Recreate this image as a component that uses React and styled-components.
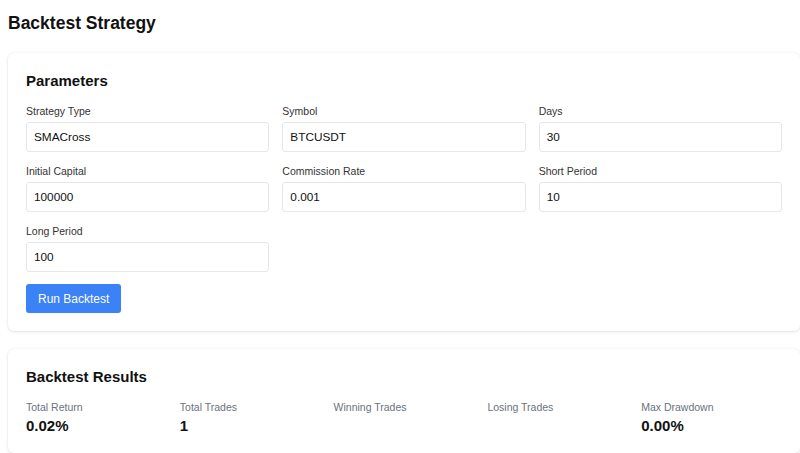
import React from "react";
import styled, { createGlobalStyle } from "styled-components";

const GlobalStyle = createGlobalStyle`
  body {
    margin: 0;
    background: #ffffff;
    font-family: "Liberation Sans", Arial, sans-serif;
    color: #111111;
  }
  * { box-sizing: border-box; }
`;

const Page = styled.div`
  padding: 11px 0 0 8px;
  display: flex;
  flex-direction: column;
`;

const Title = styled.h1`
  margin: 0 0 18px;
  font-size: 17.5px;
  line-height: 24px;
  font-weight: 700;
`;

const Card = styled.section`
  background: #ffffff;
  border-radius: 6px;
  box-shadow: 0 1px 3px rgba(0, 0, 0, 0.1), 0 0 0 1px rgba(0, 0, 0, 0.02);
  padding: 18px;
  margin-bottom: 18px;
  display: flex;
  flex-direction: column;
`;

const CardTitle = styled.h2`
  margin: 0 0 13px;
  font-size: 15px;
  line-height: 20px;
  font-weight: 700;
`;

const FormGrid = styled.div`
  display: grid;
  grid-template-columns: repeat(3, 1fr);
  column-gap: 13px;
  row-gap: 12px;
`;

const Field = styled.label`
  display: flex;
  flex-direction: column;
  gap: 3px;
`;

const Label = styled.span`
  font-size: 10.5px;
  line-height: 15px;
  color: #333333;
`;

const Input = styled.input`
  height: 30px;
  padding: 0 7px;
  border: 1px solid #e5e7eb;
  border-radius: 3px;
  font-family: inherit;
  font-size: 11.8px;
  color: #111111;
  background: #ffffff;
  outline: none;
`;

const RunButton = styled.button`
  align-self: flex-start;
  margin-top: 12px;
  height: 29px;
  padding: 0 12px;
  border: none;
  border-radius: 3px;
  background: #3b82f6;
  color: #ffffff;
  font-family: inherit;
  font-size: 12px;
  cursor: pointer;
`;

const StatsGrid = styled.div`
  display: grid;
  grid-template-columns: repeat(5, 1fr);
  column-gap: 13px;
`;

const Stat = styled.div`
  display: flex;
  flex-direction: column;
  gap: 2px;
`;

const StatLabel = styled.span`
  font-size: 10.5px;
  line-height: 15px;
  color: #6b7280;
`;

const StatValue = styled.span`
  font-size: 15px;
  line-height: 18px;
  font-weight: 700;
  min-height: 18px;
`;

const fields = [
  ["Strategy Type", "SMACross"],
  ["Symbol", "BTCUSDT"],
  ["Days", "30"],
  ["Initial Capital", "100000"],
  ["Commission Rate", "0.001"],
  ["Short Period", "10"],
  ["Long Period", "100"],
];

const stats = [
  ["Total Return", "0.02%"],
  ["Total Trades", "1"],
  ["Winning Trades", ""],
  ["Losing Trades", ""],
  ["Max Drawdown", "0.00%"],
];

export default function App() {
  return (
    <Page>
      <GlobalStyle />
      <Title>Backtest Strategy</Title>
      <Card>
        <CardTitle>Parameters</CardTitle>
        <FormGrid>
          {fields.map(([label, value]) => (
            <Field key={label}>
              <Label>{label}</Label>
              <Input defaultValue={value} />
            </Field>
          ))}
        </FormGrid>
        <RunButton>Run Backtest</RunButton>
      </Card>
      <Card>
        <CardTitle>Backtest Results</CardTitle>
        <StatsGrid>
          {stats.map(([label, value]) => (
            <Stat key={label}>
              <StatLabel>{label}</StatLabel>
              <StatValue>{value}</StatValue>
            </Stat>
          ))}
        </StatsGrid>
      </Card>
    </Page>
  );
}
